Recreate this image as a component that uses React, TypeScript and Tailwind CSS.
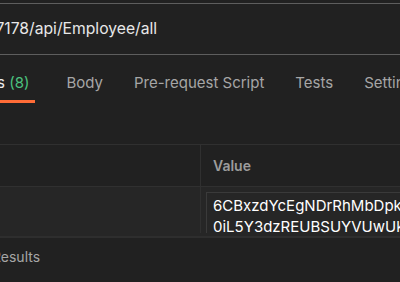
import { FC } from "react";

type TabProps = {
  label: string;
  count?: number;
  active?: boolean;
};

const Tab: FC<TabProps> = ({ label, count, active }) => {
  return (
    <div className="relative flex h-full items-center px-[6px] pt-[8px]">
      <span className={active ? "text-[#ececec]" : "text-[#a6a6a6]"}>
        {label}
        {count !== undefined && <span className="text-[#4cc37f]"> ({count})</span>}
      </span>
      {active && <div className="absolute bottom-0 left-0 right-0 h-[3px] bg-[#ff6c37]" />}
    </div>
  );
};

export default function App() {
  return (
    <div
      className="h-[282px] w-[400px] overflow-hidden bg-[#212121] pt-[3px]"
      style={{ fontFamily: "Inter, 'Liberation Sans', sans-serif" }}
    >
      {/* url bar */}
      <div className="flex h-[52px] items-center border-y border-[#5e5e5e] text-[15.7px] text-[#e8e8e8]">
        <span className="-ml-[129px] whitespace-nowrap">https://localhost:7178/api/Employee/all</span>
      </div>

      {/* request tabs */}
      <div className="flex h-[48px] items-stretch gap-[19px] whitespace-nowrap text-[15px]">
        <div className="-ml-[61px] mr-[6px] flex">
          <Tab label="Headers" count={8} active />
        </div>
        <Tab label="Body" />
        <Tab label="Pre-request Script" />
        <Tab label="Tests" />
        <Tab label="Settings" />
      </div>

      {/* headers table */}
      <div className="mt-[41px] border-t border-[#303030]">
        <div className="grid h-[42px] grid-cols-[201px_1fr] border-b border-[#303030]">
          <div className="border-r border-[#303030]" />
          <div className="flex items-center pl-[12px] text-[14px] font-semibold text-[#9c9c9c]">Value</div>
        </div>
        <div className="grid h-[46px] grid-cols-[201px_1fr] overflow-hidden bg-[#262626]">
          <div className="border-b border-r border-[#303030]" />
          <div className="pl-[5px] pt-[5px]">
            <div className="border border-[#3a3a3a] pb-[4px] pl-[6px] pt-[2px] text-[15px] leading-[21px] text-white">
              <div className="whitespace-nowrap">6CBxzdYcEgNDrRhMbDpkQx</div>
              <div className="whitespace-nowrap">0iL5Y3dzREUBSUYVUwUkPq</div>
            </div>
          </div>
        </div>
      </div>

      {/* response panel */}
      <div className="h-[3px] bg-[#262626]" />
      <div className="h-[2px] bg-[#2e2e2e]" />
      <div className="flex h-[37px] items-center text-[14px] text-[#a6a6a6]">
        <span className="-ml-[40px] whitespace-nowrap">Test Results</span>
      </div>
    </div>
  );
}
